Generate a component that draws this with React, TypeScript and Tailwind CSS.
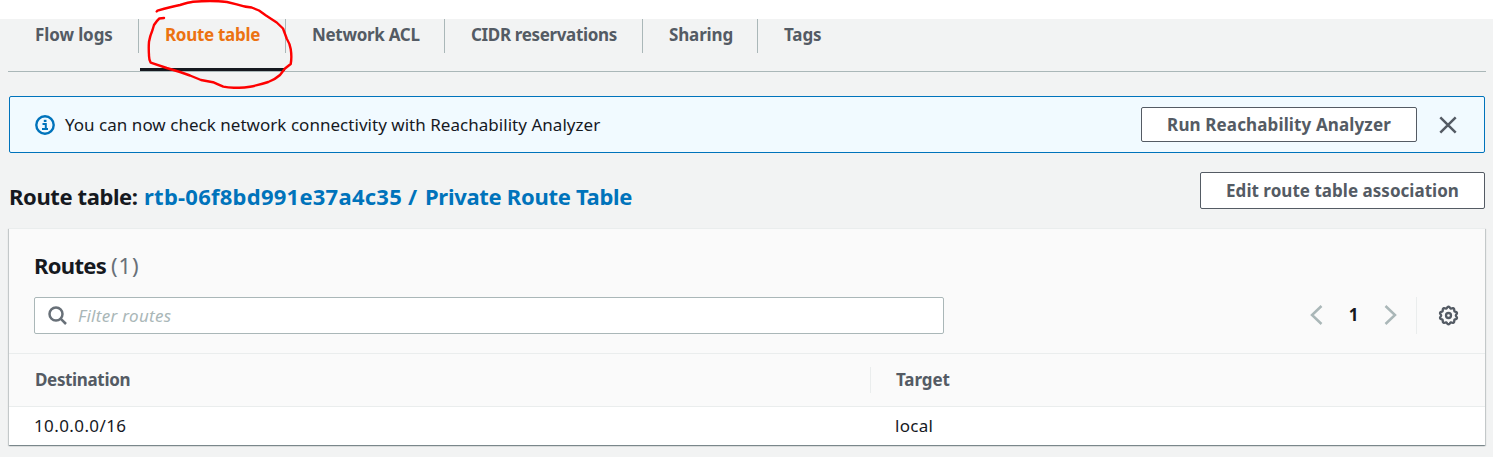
const tabs = [
  { label: 'Flow logs', box: 'w-[131px] pl-[27px] border-r', text: 'tracking-[-0.1px]' },
  { label: 'Route table', box: 'w-[147px] pl-[26px] border-r', text: 'tracking-[-0.3px] text-[#ec7211]', active: true },
  { label: 'Network ACL', box: 'w-[159px] pl-[26px] border-r', text: 'tracking-[-0.3px]' },
  { label: 'CIDR reservations', box: 'w-[198px] pl-[26px] border-r', text: 'tracking-[-0.35px]' },
  { label: 'Sharing', box: 'w-[115px] pl-[26px] border-r', text: 'tracking-[-0.15px]' },
  { label: 'Tags', box: 'w-[100px] pl-[26px]', text: 'tracking-[-0.1px]' },
];

function InfoIcon() {
  return (
    <svg width="20" height="20" viewBox="0 0 20 20" fill="none" className="text-[#0073bb]">
      <circle cx="10" cy="10" r="8.7" stroke="currentColor" strokeWidth="2.4" />
      <path d="M7.5 9h3.300v4.600M7 14h6" stroke="currentColor" strokeWidth="2" />
      <path d="M8.800 4.800h2.700v2.200H8.800z" fill="currentColor" />
    </svg>
  );
}

function GearIcon() {
  const teeth = Array.from({ length: 120 }, (_, i) => {
    const a = (i / 120) * Math.PI * 2 - Math.PI / 2;
    const r = 8.1 + 0.75 * Math.cos((i / 120) * Math.PI * 20);
    return `${(10.5 + r * Math.cos(a)).toFixed(2)},${(10.5 + r * Math.sin(a)).toFixed(2)}`;
  }).join(' ');
  return (
    <svg width="21" height="21" viewBox="0 0 21 21" fill="none" stroke="#545b64" strokeWidth="2.3">
      <polygon points={teeth} />
      <circle cx="10.5" cy="10.5" r="2.5" />
    </svg>
  );
}

function Scribble() {
  return (
    <svg className="pointer-events-none absolute left-0 top-0" width="310" height="95" viewBox="0 0 310 95" fill="none" stroke="#fe0000" strokeWidth="2.4" strokeLinecap="round" strokeLinejoin="round">
      <path d="M156.700 11.500L157.500 10.700C165 8.500 172 6.500 180 5C185 3.500 189 2.300 193 1.800Q202 1 210 1Q219 1 227 2L236.700 4.300Q245 7 251.700 7.500L259 10.500L266 15.500L276.700 22.500L283 28.500L286.700 38.500Q290 44 290.700 49Q292 57 290.700 64L285 68.500L280 75Q275 79.500 268.300 82Q259 85 250 86.700Q243 88 236.700 87.700Q229 88 223.300 86.700Q218 84.500 213 82.200L201 80L190 75.500L180 72L166.700 68L150.700 62.700Q148.800 59 149 55Q148.500 48 149 41.700Q150 36 152.500 30L154 25Q156.500 21 159.300 18.500L164 18" />
    </svg>
  );
}

export default function App() {
  return (
    <div className="relative h-[457px] w-[1493px] overflow-hidden bg-[#f2f3f3] font-['Noto_Sans',sans-serif] text-[17px] text-[#16191f]">
      <div className="h-[19px] bg-white" />
      <nav className="ml-2 mr-[7px] flex h-[53px] border-b border-[#aab7b8] font-bold text-[#545b64]">
        {tabs.map((t) => (
          <div key={t.label} className="flex flex-col justify-between">
            <div className={`h-[34px] whitespace-nowrap border-[#aab7b8] leading-[32px] ${t.box}`}>
              <span className={t.text}>{t.label}</span>
            </div>
            {t.active && <div className="ml-px h-[3px] w-[145px] bg-[#16191f]" />}
          </div>
        ))}
      </nav>

      <main className="pl-[9px] pr-2">
        <section className="mt-6 flex h-[57px] items-center rounded-[2px] border border-[#0073bb] bg-[#f1faff] pl-[25px] pr-[26px]">
          <InfoIcon />
          <p className="ml-[10px] flex-1 whitespace-nowrap tracking-[0.03px]">
            You can now check network connectivity with Reachability Analyzer
          </p>
          <button className="h-[35px] w-[276px] whitespace-nowrap rounded-[2px] border border-[#545b64] bg-white font-bold leading-[33px] tracking-[0.13px] text-[#545b64]">
            Run Reachability Analyzer
          </button>
          <svg className="ml-[21px]" width="20" height="20" viewBox="0 0 20 20" stroke="#545b64" strokeWidth="2.5">
            <path d="M2.300 2.300l15.400 15.400M17.700 2.300L2.300 17.700" />
          </svg>
        </section>

        <header className="mt-[19px] flex h-[37px] justify-between">
          <h2 className="flex whitespace-pre pt-[9px] text-[22px] font-bold leading-[30px]">
            <span className="w-[135px] tracking-[-0.4px]">Route table:</span>
            <a className="flex text-[#0073bb]">
              <span className="w-[264px] tracking-[0.25px]">rtb-06f8bd991e37a4c35</span>
              <span className="w-[17px]">/</span>
              <span className="tracking-[-0.3px]">Private Route Table</span>
            </a>
          </h2>
          <button className="w-[285px] whitespace-nowrap rounded-[2px] border border-[#545b64] bg-white font-bold tracking-[0.03px] text-[#545b64]">
            Edit route table association
          </button>
        </header>

        <section className="mt-[19px] h-[217px] border-t border-[#eaeded] bg-white shadow-[0_1px_1px_0_rgba(0,28,36,0.3),1px_1px_1px_0_rgba(0,28,36,0.15),-1px_1px_1px_0_rgba(0,28,36,0.15)]">
          <div className="h-[125px] border-b border-[#eaeded] bg-[#fafafa] pl-[25px] pr-[26px] pt-[21px]">
            <h3 className="flex h-[30px] text-[22px] leading-[30px]">
              <span className="w-[77px] font-bold tracking-[-0.7px]">Routes</span>
              <span className="tracking-[0.9px] text-[#687078]">(1)</span>
            </h3>
            <div className="mt-[17px] flex h-[37px] items-center">
              <div className="flex h-full w-[910px] items-center rounded-[2px] border border-[#aab7b8] bg-white pl-[13px]">
                <svg width="20" height="20" viewBox="0 0 20 20" fill="none" stroke="#687078" strokeWidth="2.5">
                  <circle cx="8" cy="8" r="6.500" />
                  <path d="M12.600 12.600L18 18" />
                </svg>
                <span className="ml-[10px] italic tracking-[0.3px] text-[#aab7b8]">Filter routes</span>
              </div>
              <div className="ml-auto flex h-full items-center">
                <svg className="mb-px" width="13" height="20" viewBox="0 0 13 20" fill="none" stroke="#aab7b8" strokeWidth="2.5">
                  <path d="M11.500 1L2 10l9.500 9" />
                </svg>
                <span className="mb-px w-[61px] text-center font-bold">1</span>
                <svg className="mb-px" width="13" height="20" viewBox="0 0 13 20" fill="none" stroke="#aab7b8" strokeWidth="2.500">
                  <path d="M1.500 1L11 10l-9.500 9" />
                </svg>
                <div className="ml-[19px] mr-[21px] h-full w-px bg-[#eaeded]" />
                <GearIcon />
              </div>
            </div>
          </div>
          <div className="flex h-[53px] items-center border-b border-[#eaeded] bg-[#fafafa] pl-[26px] font-bold text-[#545b64]">
            <div className="flex h-[26px] w-[836px] items-center border-r border-[#eaeded] tracking-[-0.35px]">Destination</div>
            <div className="pl-[25px] tracking-[-0.1px]">Target</div>
          </div>
          <div className="flex h-[38px] items-center pl-[25px]">
            <div className="w-[837px] tracking-[0.4px]">10.0.0.0/16</div>
            <div className="pl-[24px] tracking-[0.3px]">local</div>
          </div>
        </section>
      </main>
      <Scribble />
    </div>
  );
}
